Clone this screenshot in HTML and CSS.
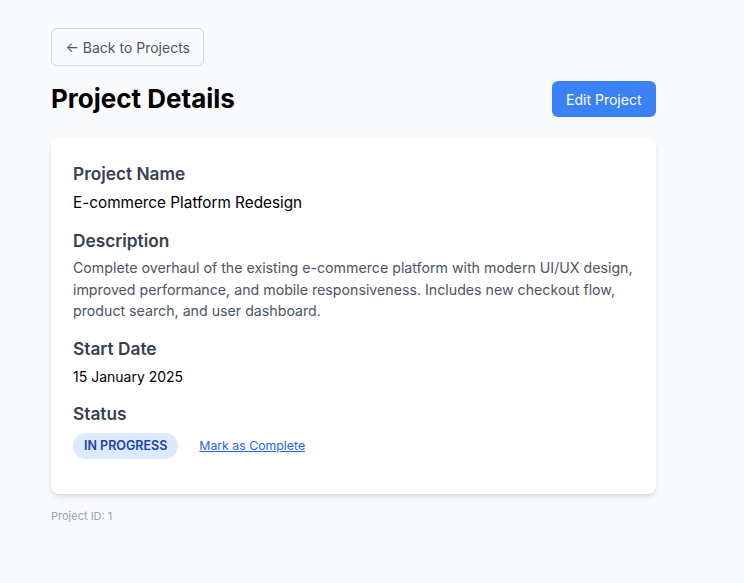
FILE: index.html
```html
<!DOCTYPE html>
<html>
<head>
<meta charset="utf-8">
<link rel="stylesheet" href="styles.css">
</head>
<body>
<div class="page">
  <button class="back-btn">← Back to Projects</button>
  <div class="header">
    <h1 class="title">Project Details</h1>
    <button class="edit-btn">Edit Project</button>
  </div>
  <div class="card">
    <div class="field">
      <h2 class="label">Project Name</h2>
      <p class="value name">E-commerce Platform Redesign</p>
    </div>
    <div class="field">
      <h2 class="label">Description</h2>
      <p class="desc">Complete overhaul of the existing e-commerce platform with modern UI/UX design, improved performance, and mobile responsiveness. Includes new checkout flow, product search, and user dashboard.</p>
    </div>
    <div class="field field-date">
      <h2 class="label">Start Date</h2>
      <p class="value date">15 January 2025</p>
    </div>
    <div class="field">
      <h2 class="label">Status</h2>
      <div class="status-row">
        <span class="badge">IN PROGRESS</span>
        <a class="link" href="#">Mark as Complete</a>
      </div>
    </div>
  </div>
  <p class="meta">Project ID: 1</p>
</div>
</body>
</html>
```

FILE: styles.css
```css
* { box-sizing: border-box; }
html, body {
  margin: 0;
  padding: 0;
  background: #f9fafb;
  font-family: Inter, "Noto Sans", sans-serif;
}
.page {
  width: 605px;
  margin-left: 51px;
  padding-top: 28px;
}
.back-btn {
  font-family: inherit;
  font-size: 14px;
  color: #4b5563;
  background: transparent;
  border: 1px solid #d1d5db;
  border-radius: 6px;
  height: 38px;
  padding: 0 13.5px;
  cursor: pointer;
}
.header {
  display: flex;
  justify-content: space-between;
  align-items: center;
  margin-top: 15px;
}
.title {
  margin: 0;
  font-size: 26px;
  font-weight: 700;
  color: #000;
  line-height: 32px;
}
.edit-btn {
  font-family: inherit;
  font-size: 14px;
  color: #fff;
  background: #3b82f6;
  border: none;
  border-radius: 6px;
  height: 36px;
  padding: 0 14.5px;
}
.card {
  margin-top: 21px;
  background: #fff;
  border-radius: 8px;
  box-shadow: 0 4px 6px -1px rgba(0,0,0,0.1), 0 2px 4px -2px rgba(0,0,0,0.1);
  padding: 22px 22px 35px;
}
.field { margin-bottom: 12px; }
.field:last-child { margin-bottom: 0; }
.field-date { margin-top: 13px; margin-bottom: 11px; }
.label {
  margin: 0;
  font-size: 17.3px;
  font-weight: 600;
  line-height: 28px;
  color: #374151;
}
.value {
  margin: 3px 0 0;
  font-size: 15.3px;
  line-height: 24px;
  color: #000;
}
.date { margin-top: 2px; font-size: 14px; }
.desc {
  margin: 2px 0 0;
  font-size: 14.2px;
  line-height: 21.5px;
  color: #4b5563;
}
.status-row {
  display: flex;
  align-items: center;
  gap: 21px;
  margin-top: 5px;
}
.badge {
  display: inline-flex;
  align-items: center;
  height: 26px;
  padding: 0 11px;
  border-radius: 13px;
  background: #dbeafe;
  color: #1e40af;
  font-size: 12.5px;
  font-weight: 600;
}
.link {
  font-size: 12.3px;
  color: #2563eb;
  text-decoration: underline;
}
.meta {
  margin: 15px 0 0;
  font-size: 11px;
  color: #9ca3af;
}
```
